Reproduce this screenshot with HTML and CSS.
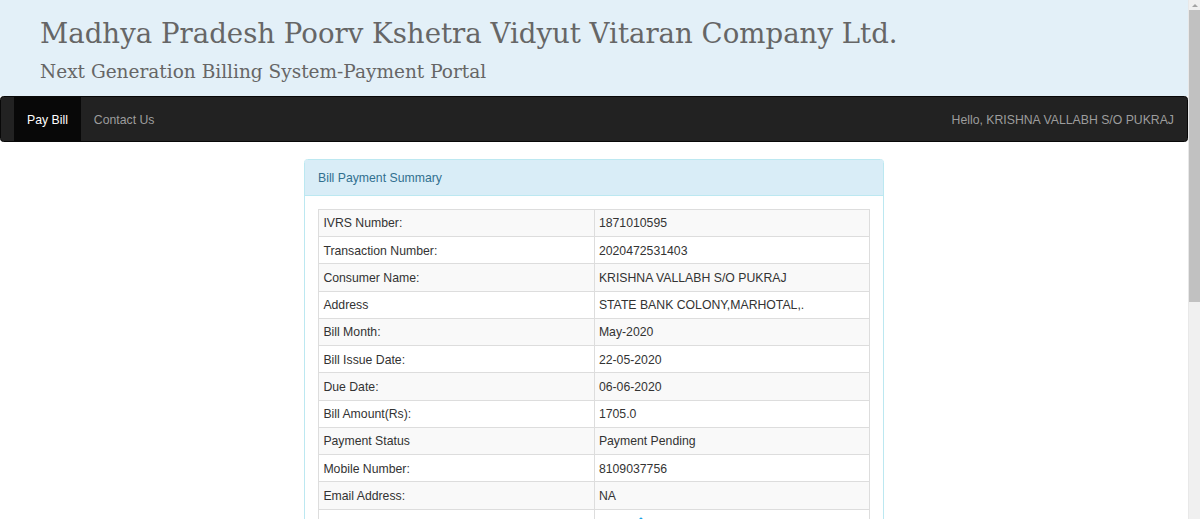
FILE: index.html
```html
<!DOCTYPE html>
<html lang="en">
  <head>
    <meta charset="UTF-8" />
    <meta name="viewport" content="width=device-width, initial-scale=1.0" />
    <title>Payment Portal</title>
    <link rel="stylesheet" href="styles.css">
  </head>
  <body>
    <div class="window">
      <div class="page">
        <div class="band">
          <h1 class="company">Madhya Pradesh Poorv Kshetra Vidyut Vitaran Company Ltd.</h1>
          <h3 class="portal">Next Generation Billing System-Payment Portal</h3>
        </div>

        <nav class="topbar">
          <ul class="menu">
            <li class="active"><a href="#">Pay Bill</a></li>
            <li><a href="#">Contact Us</a></li>
          </ul>
          <p class="hello">Hello, KRISHNA VALLABH S/O PUKRAJ</p>
        </nav>

        <div class="summary">
          <div class="summary-head">Bill Payment Summary</div>
          <div class="summary-body">
            <table class="bill">
              <tr><td>IVRS Number:</td><td>1871010595</td></tr>
              <tr><td>Transaction Number:</td><td>2020472531403</td></tr>
              <tr><td>Consumer Name:</td><td>KRISHNA VALLABH S/O PUKRAJ</td></tr>
              <tr><td>Address</td><td>STATE BANK COLONY,MARHOTAL,.</td></tr>
              <tr><td>Bill Month:</td><td>May-2020</td></tr>
              <tr><td>Bill Issue Date:</td><td>22-05-2020</td></tr>
              <tr><td>Due Date:</td><td>06-06-2020</td></tr>
              <tr><td>Bill Amount(Rs):</td><td>1705.0</td></tr>
              <tr><td>Payment Status</td><td>Payment Pending</td></tr>
              <tr><td>Mobile Number:</td><td>8109037756</td></tr>
              <tr><td>Email Address:</td><td>NA</td></tr>
              <tr>
                <td></td>
                <td>
                  <svg class="gateway" width="110" height="40" viewBox="0 0 110 40">
                    <circle cx="42" cy="4" r="1.6" fill="#1aa3e8" />
                    <rect x="8" y="12" width="94" height="22" rx="3" fill="#eaf6fd" stroke="#9cd3f2" />
                  </svg>
                </td>
              </tr>
            </table>
          </div>
        </div>
      </div>

      <!-- browser scrollbar as it shows in the screenshot -->
      <div class="rail">
        <div class="rail-up"></div>
        <div class="rail-thumb"></div>
      </div>
    </div>
  </body>
</html>
```

FILE: styles.css
```css
* {
  box-sizing: border-box;
}
body {
  margin: 0;
  font-family: "Liberation Sans", Arial, sans-serif;
  font-size: 12.25px;
  line-height: 17.5px;
  color: #333;
  background-color: #fff;
}
.window {
  display: flex;
  height: 100vh;
  overflow: hidden;
}
.page {
  flex: 1;
  min-width: 0;
}
.rail {
  width: 12px;
  background-color: #f0f0f0;
  border-left: 1px solid #e8e8e8;
}
.rail-up {
  width: 0;
  height: 0;
  margin: 4px auto 0;
  border-left: 3px solid transparent;
  border-right: 3px solid transparent;
  border-bottom: 3px solid #a3a3a3;
}
.rail-thumb {
  height: 292px;
  margin-top: 3px;
  background-color: #c1c1c1;
}

/* header band */
.band {
  background-color: #e3f0f8;
  padding: 16px 40px 0;
  height: 96px;
}
.company {
  margin: 0;
  font-family: "DejaVu Serif", Georgia, serif;
  font-weight: normal;
  font-size: 27.6px;
  line-height: 36px;
  color: #666;
}
.portal {
  margin: 8px 0 0;
  font-family: "DejaVu Serif", Georgia, serif;
  font-weight: normal;
  font-size: 18.5px;
  line-height: 24px;
  color: #666;
}

/* navbar */
.topbar {
  display: flex;
  justify-content: space-between;
  align-items: center;
  height: 46px;
  padding: 0 13px;
  margin-bottom: 17px;
  background-color: #222;
  border: 1px solid #080808;
  border-radius: 3.5px;
}
.menu {
  display: flex;
  margin: 0;
  padding: 0;
  list-style: none;
  height: 100%;
}
.menu a {
  display: block;
  height: 100%;
  padding: 14.5px 13px 0;
  color: #9d9d9d;
  text-decoration: none;
}
.menu .active a {
  color: #fff;
  background-color: #080808;
}
.hello {
  margin: 3px 0 0;
  color: #9d9d9d;
}

/* summary panel */
.summary {
  width: 580px;
  margin: 0 auto;
  border: 1px solid #bce8f1;
  border-radius: 3.5px;
}
.summary-head {
  padding: 10px 13px 7.5px;
  background-color: #d9edf7;
  color: #31708f;
  border-bottom: 1px solid #bce8f1;
}
.summary-body {
  padding: 13px;
}
.bill {
  width: 100%;
  border-collapse: collapse;
  border: 1px solid #ddd;
  table-layout: fixed;
}
.bill td {
  width: 50%;
  padding: 5.4px 4.375px 3.35px;
  border: 1px solid #ddd;
  vertical-align: top;
}
.bill tr:nth-child(odd) td {
  background-color: #f9f9f9;
}
.gateway {
  display: block;
}
```
